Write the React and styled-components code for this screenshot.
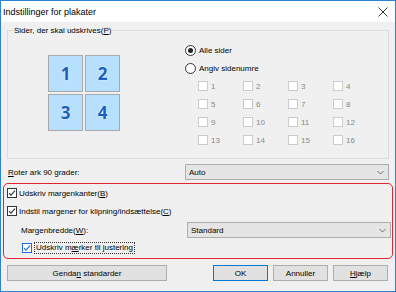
import React from 'react'
import styled, { createGlobalStyle } from 'styled-components'

const Global = createGlobalStyle`
html, body {
  margin: 0;
  padding: 0;
  background: #f0f0f0;
}
* { box-sizing: border-box; }
`

const Window = styled.div`
width: 396px;
height: 292px;
border: 1px solid #2b82d9;
background: #f0f0f0;
font-family: "Liberation Sans", Arial, sans-serif;
font-size: 8px;
color: #000;
display: flex;
flex-direction: column;
`

const TitleBar = styled.div`
height: 21px;
background: #fff;
display: flex;
align-items: center;
justify-content: space-between;
padding: 0 7px 0 2px;
font-size: 9px;
flex-shrink: 0;
`

const Body = styled.div`
flex: 1;
padding: 3px 6px 0 6px;
display: flex;
flex-direction: column;
`

const Group = styled.fieldset`
margin: 0;
padding: 0;
border: 1px solid #dcdcdc;
display: flex;
`

const Legend = styled.legend`
margin-left: 5px;
padding: 0 1px;
line-height: 11px;
`

const U = styled.span`
text-decoration: underline;
`

const TileGrid = styled.div`
display: grid;
grid-template-columns: 35px 35px;
grid-template-rows: 37px 37px;
gap: 2px;
margin: 19px 0 0 40px;
align-self: flex-start;
`

const Tile = styled.div`
background: #b6e0fe;
border: 1px solid #a9a9a9;
display: flex;
align-items: center;
justify-content: center;
font-family: "Open Sans", "Liberation Sans", sans-serif;
font-weight: 700;
font-size: 17px;
color: #1b5fc0;
text-shadow: 0 0 2px #fff;
`

const Options = styled.div`
margin-left: 65px;
padding: 5px 0 9px 0;
display: flex;
flex-direction: column;
`

const OptionRow = styled.div`
height: 18px;
display: flex;
align-items: center;
gap: 3px;
`

const Radio = styled.span`
width: 11px;
height: 11px;
border-radius: 50%;
border: 1px solid #333;
background: #fff;
display: flex;
align-items: center;
justify-content: center;
&::after {
  content: '';
  width: 5px;
  height: 5px;
  border-radius: 50%;
  background: ${p => (p.$on ? '#222' : 'transparent')};
}
`

const PageGrid = styled.div`
margin-left: 13px;
display: grid;
grid-template-columns: repeat(4, 45px);
grid-auto-rows: 18px;
`

const PageItem = styled.div`
display: flex;
align-items: center;
gap: 3px;
color: #8a8a8a;
`

const Box = styled.span`
width: 10px;
height: 10px;
flex-shrink: 0;
background: #fff;
border: 1px solid ${p => p.$color || '#333'};
display: flex;
align-items: center;
justify-content: center;
`

const LineRow = styled.div`
height: ${p => p.$h || 16}px;
margin-top: ${p => p.$top || 0}px;
display: flex;
align-items: center;
justify-content: space-between;
padding-left: 1px;
`

const Select = styled.div`
width: 204px;
height: 16px;
background: #e5e5e5;
border: 1px solid #adadad;
display: flex;
align-items: center;
justify-content: space-between;
padding: 0 4px 0 3px;
`

const Highlight = styled.div`
margin: 3px -4px 0 -4px;
border: 1px solid #e3262e;
border-radius: 5px;
padding: 0 1px 2px 3px;
display: flex;
flex-direction: column;
`

const CheckRow = styled.div`
height: ${p => p.$h || 18}px;
display: flex;
align-items: center;
gap: 2px;
padding-left: ${p => p.$indent || 0}px;
`

const SubRow = styled.div`
height: 20px;
display: flex;
align-items: center;
justify-content: space-between;
padding-left: 14px;
`

const Focus = styled.span`
border: 1px dotted #333;
padding: 0 1px;
line-height: 10px;
`

const ButtonRow = styled.div`
margin-top: 6px;
display: flex;
align-items: center;
padding-right: 1px;
`

const Button = styled.div`
width: ${p => p.$w}px;
height: 16px;
background: #e1e1e1;
border: 1px solid ${p => (p.$primary ? '#0078d7' : '#adadad')};
display: flex;
align-items: center;
justify-content: center;
margin-left: ${p => p.$ml || 0}px;
`

const Check = ({ color = '#333' }) => (
  <Box $color={color}>
    <svg width="8" height="8" viewBox="0 0 8 8">
      <path d="M1 4.2 L3 6.2 L7 1.6" fill="none" stroke={color} strokeWidth="1.1" />
    </svg>
  </Box>
)

const Chevron = () => (
  <svg width="7" height="5" viewBox="0 0 7 5">
    <path d="M0.5 1 L3.5 4 L6.5 1" fill="none" stroke="#606060" strokeWidth="0.9" />
  </svg>
)

const Close = () => (
  <svg width="10" height="10" viewBox="0 0 10 10">
    <path d="M0.5 0.5 L9.5 9.5 M9.5 0.5 L0.5 9.5" stroke="#333" strokeWidth="1" />
  </svg>
)

const pages = Array.from({ length: 16 }, (_, i) => i + 1)

export default function App() {
  return (
    <>
      <Global />
      <Window>
        <TitleBar>
          <span>Indstillinger for plakater</span>
          <Close />
        </TitleBar>
        <Body>
          <Group>
            <Legend>Sider, der skal udskrives(<U>P</U>)</Legend>
            <TileGrid>
              <Tile>1</Tile>
              <Tile>2</Tile>
              <Tile>3</Tile>
              <Tile>4</Tile>
            </TileGrid>
            <Options>
              <OptionRow>
                <Radio $on />
                <span>Alle sider</span>
              </OptionRow>
              <OptionRow>
                <Radio />
                <span>Angiv sidenumre</span>
              </OptionRow>
              <PageGrid>
                {pages.map(n => (
                  <PageItem key={n}>
                    <Box $color="#cccccc" />
                    <span>{n}</span>
                  </PageItem>
                ))}
              </PageGrid>
            </Options>
          </Group>

          <LineRow $top={5}>
            <span><U>R</U>oter ark 90 grader:</span>
            <Select>
              <span>Auto</span>
              <Chevron />
            </Select>
          </LineRow>

          <Highlight>
            <CheckRow>
              <Check />
              <span>Udskriv margenkanter(<U>B</U>)</span>
            </CheckRow>
            <CheckRow>
              <Check />
              <span>Indstil margener for klipning/indsættelse(<U>C</U>)</span>
            </CheckRow>
            <SubRow>
              <span>Margenbredde(<U>W</U>):</span>
              <Select>
                <span>Standard</span>
                <Chevron />
              </Select>
            </SubRow>
            <CheckRow $h={16} $indent={15}>
              <Check color="#1f6fd0" />
              <Focus>Udskriv m<U>æ</U>rker til justering</Focus>
            </CheckRow>
          </Highlight>

          <ButtonRow>
            <Button $w={160}><span>Genda<U>n</U> standarder</span></Button>
            <Button $w={55} $ml={46} $primary>OK</Button>
            <Button $w={55} $ml={5}>Annuller</Button>
            <Button $w={55} $ml={5}><span><U>H</U>jælp</span></Button>
          </ButtonRow>
        </Body>
      </Window>
    </>
  )
}
